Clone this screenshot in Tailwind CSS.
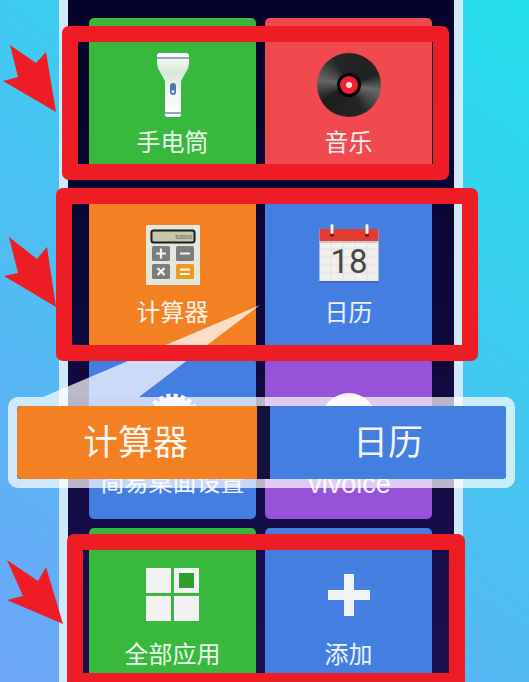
<!DOCTYPE html>
<html lang="en">

<head>
    <meta charset="UTF-8">
    <meta name="viewport" content="width=device-width, initial-scale=1.0">
    <title>简易桌面</title>
    <script src="https://cdn.jsdelivr.net/npm/@tailwindcss/browser@4"></script>
</head>

<body class="font-['Noto_Sans_CJK_SC','Noto_Sans',sans-serif]">
    <div class="relative w-[529px] h-[682px] overflow-hidden bg-[linear-gradient(215deg,#24dfeb,#6ea5f8)]">

        <!-- Phone -->
        <div class="ml-[59px] w-[404px] h-[682px] border-x-[9px] border-[#cfe9fa] bg-linear-to-b from-[#04042a] to-[#1b1050] pt-[18px] pl-[21px]">
            <div class="grid grid-cols-[167px_167px] auto-rows-[161px] gap-x-[9px] gap-y-[9px] text-[24px] leading-[28px] text-white/90">

                <div class="flex flex-col items-center pt-[33px] rounded-[5px] bg-[#38b83c]">
                    <svg class="w-[68px] h-[68px]" viewBox="0 0 68 68">
                        <defs>
                            <linearGradient id="torch" x1="0" y1="0" x2="0" y2="1">
                                <stop offset="0" stop-color="#ffffff" />
                                <stop offset="0.3" stop-color="#d5e8d8" />
                                <stop offset="0.6" stop-color="#eef6ee" />
                                <stop offset="1" stop-color="#ffffff" />
                            </linearGradient>
                        </defs>
                        <path d="M18 5q0-3 3-3h26q3 0 3 3v7q0 5-3 9l-5 9v34q0 2-2 2H28q-2 0-2-2V30l-5-9q-3-4-3-9z" fill="url(#torch)" />
                        <rect x="18" y="6" width="32" height="2" fill="#8fa6c8" />
                        <rect x="26" y="61" width="16" height="2" fill="#8fa6c8" />
                        <rect x="31" y="32" width="6" height="12" rx="3" fill="#4c78b8" />
                        <rect x="32.5" y="39" width="3" height="3" rx="1.5" fill="#dfeaf5" />
                    </svg>
                    <span class="mt-[8px]">手电筒</span>
                </div>

                <div class="flex flex-col items-center pt-[33px] rounded-[5px] bg-[#f0494f]">
                    <div class="w-[64px] h-[64px] my-[2px] rounded-full flex items-center justify-center bg-[conic-gradient(from_30deg,#222,#222_40deg,#6a6a6a_70deg,#262626_120deg,#1d1d1d_210deg,#666_250deg,#262626_300deg,#222)]">
                        <div class="w-[24px] h-[24px] rounded-full flex items-center justify-center bg-[#ee2230] border-[3px] border-black">
                            <div class="w-[6px] h-[6px] rounded-full bg-[#ffe9e0]"></div>
                        </div>
                    </div>
                    <span class="mt-[8px]">音乐</span>
                </div>

                <div class="flex flex-col items-center pt-[33px] rounded-[5px] bg-[#f48024]">
                    <svg class="w-[68px] h-[68px]" viewBox="0 0 68 68">
                        <rect x="7" y="4" width="54" height="60" rx="1" fill="#e6e6dd" />
                        <rect x="12.5" y="9.5" width="43" height="12" rx="2" fill="#c2c9a8" stroke="#1b1b1b" stroke-width="2" />
                        <text x="53" y="18" text-anchor="end" font-family="Liberation Sans, sans-serif" font-size="6" fill="#555">50000</text>
                        <rect x="13" y="25" width="18" height="15" rx="1.5" fill="#7d7d7d" />
                        <rect x="37" y="25" width="18" height="15" rx="1.5" fill="#7d7d7d" />
                        <rect x="13" y="43" width="18" height="15" rx="1.5" fill="#7d7d7d" />
                        <rect x="37" y="43" width="18" height="15" rx="1.5" fill="#ee9a1c" />
                        <path d="M17 32.5h10M22 27.5v10M41 32.5h10M18.5 47l7 7M25.5 47l-7 7M41 48.5h10M41 53h10" stroke="#f4f4f4" stroke-width="2.2" fill="none" />
                    </svg>
                    <span class="mt-[8px]">计算器</span>
                </div>

                <div class="flex flex-col items-center pt-[33px] rounded-[5px] bg-[#447ee0]">
                    <svg class="w-[68px] h-[68px]" viewBox="0 0 68 68">
                        <rect x="4.5" y="8" width="59" height="52" fill="#f1f0ec" />
                        <path d="M4.5 28h59M4.5 36h59M4.5 44h59M4.5 52h59M16 22v38M28 22v38M40 22v38M52 22v38" stroke="#e2e1dc" stroke-width="1" fill="none" />
                        <rect x="4.5" y="8" width="59" height="12" fill="#e23c30" />
                        <rect x="4.5" y="20" width="59" height="2" fill="#c9c9c5" />
                        <rect x="4.5" y="60" width="59" height="2" fill="#3a6ac4" />
                        <circle cx="17" cy="14" r="2" fill="#6b1c14" />
                        <circle cx="52" cy="14" r="2" fill="#6b1c14" />
                        <rect x="15.5" y="3" width="3" height="10" rx="1.5" fill="#f4f0ea" />
                        <rect x="50.5" y="3" width="3" height="10" rx="1.5" fill="#f4f0ea" />
                        <text x="34" y="52" text-anchor="middle" font-family="Roboto, sans-serif" font-size="33" fill="#464646">18</text>
                    </svg>
                    <span class="mt-[8px]">日历</span>
                </div>

                <div class="flex flex-col items-center pt-[33px] rounded-[5px] bg-[#447ee0]">
                    <svg class="w-[68px] h-[68px]" viewBox="0 0 68 68">
                        <circle cx="34" cy="31" r="25" fill="#f4f6fb" />
                        <circle cx="34" cy="31" r="26" fill="none" stroke="#f4f6fb" stroke-width="5" stroke-dasharray="4 3.2" />
                    </svg>
                    <span class="mt-[8px] whitespace-nowrap">简易桌面设置</span>
                </div>

                <div class="flex flex-col items-center pt-[33px] rounded-[5px] bg-[#9652d8]">
                    <div class="w-[56px] h-[56px] mt-[2px] mb-[10px] rounded-full bg-[#f6f3fb]"></div>
                    <span class="mt-[11px] pl-[2px] font-['Liberation_Sans',sans-serif] text-[27px]">vivoice</span>
                </div>

                <div class="flex flex-col items-center pt-[33px] rounded-[5px] bg-[#38b83c]">
                    <div class="w-[68px] h-[68px] py-[7px] px-[7px]">
                        <div class="grid grid-cols-2 gap-[3px] w-[53px]">
                            <div class="h-[25px] bg-[#f2f2f2]"></div>
                            <div class="h-[25px] border-[5px] border-[#f2f2f2] bg-[#2f9e2f]"></div>
                            <div class="h-[25px] bg-[#f2f2f2]"></div>
                            <div class="h-[25px] bg-[#f2f2f2]"></div>
                        </div>
                    </div>
                    <span class="mt-[10px]">全部应用</span>
                </div>

                <div class="flex flex-col items-center pt-[33px] rounded-[5px] bg-[#447ee0]">
                    <svg class="w-[68px] h-[68px]" viewBox="0 0 68 68">
                        <path d="M29 13h10v16h16v10H39v16H29V39H13V29h16z" fill="#f3f4f8" />
                    </svg>
                    <span class="mt-[10px]">添加</span>
                </div>
            </div>
        </div>

        <!-- Wedge from the dragged tile, and the arrows drawn on the screenshot -->
        <svg class="absolute inset-0 w-[529px] h-[682px]" viewBox="0 0 529 682">
            <polygon points="260,305 43,397 139,397" fill="#ffffff" fill-opacity="0.72" />
            <polygon points="56,112 46,52 36,63 10,45 18,77 3,81" fill="#ee1c25" />
            <polygon points="56,307 47,247 37,259 9,237 18,273 4,276" fill="#ee1c25" />
            <polygon points="63,624 46,567 38,581 7,560 23,596 7,600" fill="#ee1c25" />
        </svg>

        <!-- Popup -->
        <div class="absolute left-[8px] top-[397px] w-[507px] h-[91px] rounded-[10px] border-[9px] border-white/70 text-[35px] leading-[40px] text-white/95">
            <div class="flex justify-between h-full bg-[#15103f] rounded-[5px]">
                <div class="w-[240px] flex items-center justify-center pr-[3px] pb-[6px] rounded-l-[5px] bg-[#f48024]">计算器</div>
                <div class="w-[236px] flex items-center justify-center pb-[6px] rounded-r-[5px] bg-[#447ee0]">日历</div>
            </div>
        </div>

        <!-- Red frames -->
        <div class="absolute left-[62px] top-[26px] w-[387px] h-[154px] rounded-[7px] border-[16px] border-[#ee1c25]"></div>
        <div class="absolute left-[56px] top-[188px] w-[422px] h-[173px] rounded-[7px] border-[16px] border-[#ee1c25]"></div>
        <div class="absolute left-[67px] top-[534px] w-[398px] h-[155px] rounded-[7px] border-[16px] border-[#ee1c25]"></div>
    </div>
</body>

</html>
